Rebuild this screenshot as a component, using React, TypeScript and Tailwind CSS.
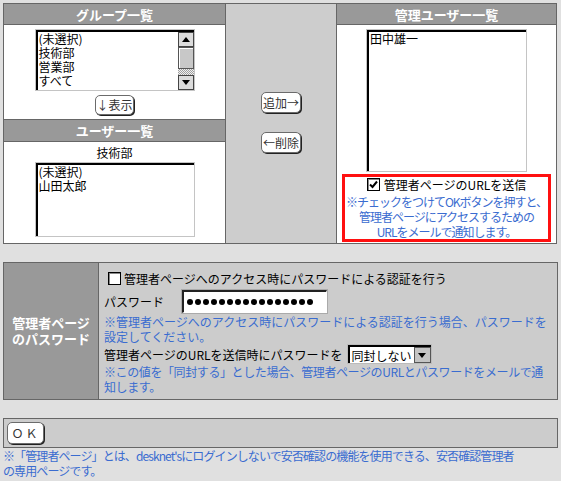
import type { ReactNode } from "react";

function Btn({ label, className = "" }: { label: string; className?: string }) {
  return (
    <button
      type="button"
      className={`flex items-center justify-center rounded-[5px] border border-[#6b6b6b] bg-white text-[12px] leading-none text-[#333] shadow-[1px_1px_0_#222] ${className}`}
    >
      {label}
    </button>
  );
}

function Arrow({ down = false }: { down?: boolean }) {
  return (
    <svg width="8" height="5" viewBox="0 0 8 5">
      {down ? <polygon points="0,0 8,0 4,5" fill="#000" /> : <polygon points="0,5 8,5 4,0" fill="#000" />}
    </svg>
  );
}

function Scrollbar() {
  return (
    <div className="flex w-[16px] flex-col">
      <div className="flex h-[15px] items-center justify-center border border-[#444] bg-[#dcdcdc]">
        <Arrow />
      </div>
      <div className="h-[22px] border border-[#555] bg-[#c8c8c8] shadow-[inset_1px_1px_0_#fff]" />
      <div className="flex-1 bg-[repeating-conic-gradient(#a0a0a0_0_25%,#f0f0f0_0_50%)] bg-[length:2px_2px]" />
      <div className="flex h-[15px] items-center justify-center border border-[#444] bg-[#dcdcdc]">
        <Arrow down />
      </div>
    </div>
  );
}

function Header({ children, className = "" }: { children: ReactNode; className?: string }) {
  return (
    <div className={`flex items-center justify-center border-b border-[#666] bg-[#999] text-[13px] font-bold text-white ${className}`}>
      {children}
    </div>
  );
}

function Check({ checked = false }: { checked?: boolean }) {
  return (
    <span className="flex h-[13px] w-[13px] shrink-0 items-center justify-center border border-black bg-white shadow-[inset_1px_1px_0_#888]">
      {checked && (
        <svg width="9" height="9" viewBox="0 0 9 9">
          <path d="M1 4.5 L3.5 7 L8 1.5" stroke="#000" strokeWidth="2" fill="none" />
        </svg>
      )}
    </span>
  );
}

export default function App() {
  const dots = Array.from({ length: 16 });

  return (
    <div className="min-h-screen bg-[#e0e0e0] pl-[3px] pt-[3px] font-['Noto_Sans_CJK_JP','Noto_Sans',sans-serif] text-[12px] leading-[15px] text-black">
      {/* top: groups / users / admins */}
      <div className="flex h-[241px] w-[554px] border border-[#666]">
        <div className="flex w-[222px] flex-col border-r border-[#666]">
          <Header className="h-[21px]">グループ一覧</Header>
          <div className="flex h-[95px] flex-col items-center border-b border-[#666] bg-white pt-[4px]">
            <div className="h-[62px] w-[160px] border border-[#c4c4c4] bg-white">
              <div className="flex h-full border-l-2 border-t-2 border-black">
                <div className="flex-1 pl-[1px] leading-[14px]">
                  <div>(未選択)</div>
                  <div>技術部</div>
                  <div>営業部</div>
                  <div>すべて</div>
                </div>
                <Scrollbar />
              </div>
            </div>
            <Btn label="↓表示" className="mt-[4px] h-[20px] w-[39px]" />
          </div>
          <Header className="h-[22px]">ユーザー一覧</Header>
          <div className="flex flex-1 flex-col items-center bg-white pt-[3px]">
            <div>技術部</div>
            <div className="mt-[2px] h-[75px] w-[160px] border border-[#c4c4c4] bg-white">
              <div className="h-full border-l-2 border-t-2 border-black pl-[1px] leading-[14px]">
                <div>(未選択)</div>
                <div>山田太郎</div>
              </div>
            </div>
          </div>
        </div>

        <div className="flex w-[111px] flex-col items-center gap-[19px] border-r border-[#666] bg-[#cdcdcd] pt-[88px]">
          <Btn label="追加→" className="h-[21px] w-[40px]" />
          <Btn label="←削除" className="h-[21px] w-[40px]" />
        </div>

        <div className="flex flex-1 flex-col">
          <Header className="h-[21px]">管理ユーザー一覧</Header>
          <div className="flex flex-1 flex-col items-center bg-white pt-[4px]">
            <div className="h-[143px] w-[161px] border border-[#c4c4c4] bg-white">
              <div className="h-full border-l-2 border-t-2 border-black pl-[1px] leading-[14px]">
                <div>田中雄一</div>
              </div>
            </div>
            <div className="mt-[2px] h-[68px] w-[209px] border-[3px] border-[#ff1010] text-center">
              <div className="flex h-[15px] items-center justify-center gap-[4px]">
                <Check checked />
                <span>管理者ページのURLを送信</span>
              </div>
              <div className="mt-[2px] whitespace-nowrap tracking-[-1px] text-[#3a6cd0]">
                ※チェックをつけてOKボタンを押すと、
                <br />
                管理者ページにアクセスするための
                <br />
                URLをメールで通知します。
              </div>
            </div>
          </div>
        </div>
      </div>

      {/* admin page password */}
      <div className="mt-[18px] flex h-[138px] w-[555px] border border-[#666] bg-[#cccccc]">
        <div className="flex w-[95px] flex-col items-center justify-center border-r border-[#666] bg-[#999] text-[13px] font-bold leading-[16px] text-white">
          <div>管理者ページ</div>
          <div>のパスワード</div>
        </div>
        <div className="flex-1 pl-[5px] pt-[8px]">
          <div className="flex h-[15px] items-center gap-[3px] pl-[4px]">
            <Check />
            <span>管理者ページへのアクセス時にパスワードによる認証を行う</span>
          </div>
          <div className="mt-[4px] flex h-[23px] items-center">
            <span className="w-[78px]">パスワード</span>
            <div className="flex h-[23px] w-[145px] items-center gap-[2px] border-l-2 border-t-2 border-[#222] border-b border-r border-b-white border-r-white bg-white pl-[3px] shadow-[0_0_0_1px_#aaa]">
              {dots.map((_, i) => (
                <span key={i} className="h-[6px] w-[6px] rounded-full bg-black" />
              ))}
            </div>
          </div>
          <div className="mt-[1px] whitespace-nowrap text-[#3a6cd0]">
            ※管理者ページへのアクセス時にパスワードによる認証を行う場合、パスワードを
            <br />
            設定してください。
          </div>
          <div className="flex h-[20px] items-center gap-[4px]">
            <span>管理者ページのURLを送信時にパスワードを</span>
            <div className="flex h-[20px] w-[85px] border border-[#bbb] bg-white">
              <div className="flex flex-1 border-l-2 border-t-2 border-black">
                <span className="flex-1 pl-[2px] leading-[17px]">同封しない</span>
                <span className="flex w-[17px] items-center justify-center border border-[#555] bg-[#c4c4c4]">
                  <Arrow down />
                </span>
              </div>
            </div>
          </div>
          <div className="whitespace-nowrap tracking-[-0.4px] text-[#3a6cd0]">
            ※この値を「同封する」とした場合、管理者ページのURLとパスワードをメールで通
            <br />
            知します。
          </div>
        </div>
      </div>

      {/* OK */}
      <div className="mt-[18px] h-[30px] w-[555px] border border-[#666] bg-[#cccccc] pl-[3px] pt-[3px]">
        <Btn label="ＯＫ" className="h-[22px] w-[37px] tracking-[2px]" />
      </div>
      <div className="whitespace-nowrap tracking-[-0.9px] text-[#3a6cd0]">
        ※「管理者ページ」とは、desknet'sにログインしないで安否確認の機能を使用できる、安否確認管理者
        <br />
        の専用ページです。
      </div>
    </div>
  );
}
